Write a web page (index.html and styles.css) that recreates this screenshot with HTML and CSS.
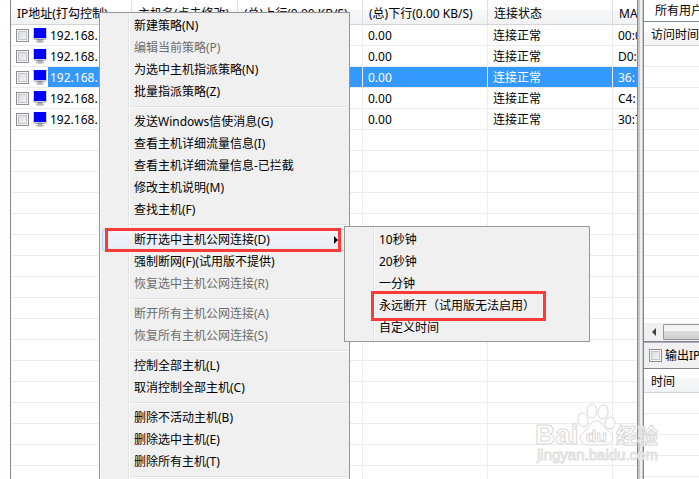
FILE: index.html
```
<!DOCTYPE html>
<html lang="zh-CN">
<head>
<meta charset="utf-8">
<title>主机列表</title>
<link rel="stylesheet" href="styles.css">
</head>
<body>
<svg class="defs" aria-hidden="true">
  <symbol id="pc" viewBox="0 0 14 15">
    <rect x="0" y="0" width="14" height="11" fill="#c9ced6"/>
    <rect x="1" y="0" width="12" height="10" fill="#0000fa"/>
    <path d="M0 11h14l-3 1H3z" fill="#a4a8ae"/>
    <path d="M5 11h4v2H5z" fill="#8a8e94"/>
    <ellipse cx="7" cy="13.5" rx="4" ry="1.3" fill="#b4b8bd"/>
  </symbol>
</svg>
<main class="app">
  <section class="hosts">
    <table class="grid">
      <colgroup><col class="c-ip"><col class="c-name"><col class="c-num"><col class="c-num"><col class="c-num"><col></colgroup>
      <thead><tr><th>IP地址(打勾控制)</th><th>主机名(点击修改)</th><th>(总)上行(0.00 KB/S)</th><th>(总)下行(0.00 KB/S)</th><th>连接状态</th><th>MAC</th></tr></thead>
      <tbody>
        <tr><td class="ip"><label><input type="checkbox"><svg class="pc"><use href="#pc"/></svg><span>192.168.</span></label></td><td></td><td></td><td>0.00</td><td>连接正常</td><td>00:0</td></tr>
        <tr><td class="ip"><label><input type="checkbox"><svg class="pc"><use href="#pc"/></svg><span>192.168.</span></label></td><td></td><td></td><td>0.00</td><td>连接正常</td><td>D0:</td></tr>
        <tr class="selected"><td class="ip"><label><input type="checkbox"><svg class="pc"><use href="#pc"/></svg><span>192.168.</span></label></td><td></td><td></td><td>0.00</td><td>连接正常</td><td>36:</td></tr>
        <tr><td class="ip"><label><input type="checkbox"><svg class="pc"><use href="#pc"/></svg><span>192.168.</span></label></td><td></td><td></td><td>0.00</td><td>连接正常</td><td>C4:</td></tr>
        <tr><td class="ip"><label><input type="checkbox"><svg class="pc"><use href="#pc"/></svg><span>192.168.</span></label></td><td></td><td></td><td>0.00</td><td>连接正常</td><td>30:7</td></tr>
        <tr><td></td><td></td><td></td><td></td><td></td><td></td></tr>
        <tr><td></td><td></td><td></td><td></td><td></td><td></td></tr>
        <tr><td></td><td></td><td></td><td></td><td></td><td></td></tr>
        <tr><td></td><td></td><td></td><td></td><td></td><td></td></tr>
        <tr><td></td><td></td><td></td><td></td><td></td><td></td></tr>
        <tr><td></td><td></td><td></td><td></td><td></td><td></td></tr>
        <tr><td></td><td></td><td></td><td></td><td></td><td></td></tr>
        <tr><td></td><td></td><td></td><td></td><td></td><td></td></tr>
        <tr><td></td><td></td><td></td><td></td><td></td><td></td></tr>
        <tr><td></td><td></td><td></td><td></td><td></td><td></td></tr>
        <tr><td></td><td></td><td></td><td></td><td></td><td></td></tr>
        <tr><td></td><td></td><td></td><td></td><td></td><td></td></tr>
        <tr><td></td><td></td><td></td><td></td><td></td><td></td></tr>
        <tr><td></td><td></td><td></td><td></td><td></td><td></td></tr>
        <tr><td></td><td></td><td></td><td></td><td></td><td></td></tr>
        <tr><td></td><td></td><td></td><td></td><td></td><td></td></tr>
        <tr><td></td><td></td><td></td><td></td><td></td><td></td></tr>
      </tbody>
    </table>
  </section>
  <div class="splitter"></div>
  <aside class="side">
    <h2 class="title">所有用户</h2>
    <div class="list visits">
      <div class="list-head">访问时间</div>
      <div class="lines"></div>
      <div class="scroll"><button class="arrow" aria-label="向左滚动"><svg viewBox="0 0 4 8"><path d="M4 0v8L0 4z"/></svg></button><div class="thumb"></div></div>
    </div>
    <label class="output"><input type="checkbox"><span>输出IP</span></label>
    <div class="list times">
      <div class="list-head">时间</div>
      <div class="lines"></div>
    </div>
  </aside>
</main>

<div class="menu main-menu" role="menu">
  <button role="menuitem">新建策略(N)</button>
  <button role="menuitem" disabled>编辑当前策略(P)</button>
  <button role="menuitem">为选中主机指派策略(N)</button>
  <button role="menuitem">批量指派策略(Z)</button>
  <hr>
  <button role="menuitem">发送Windows信使消息(G)</button>
  <button role="menuitem">查看主机详细流量信息(I)</button>
  <button role="menuitem">查看主机详细流量信息-已拦截</button>
  <button role="menuitem">修改主机说明(M)</button>
  <button role="menuitem">查找主机(F)</button>
  <hr>
  <button role="menuitem" class="open marked">断开选中主机公网连接(D)<svg class="more" viewBox="0 0 4 8"><path d="M0 0v8l4-4z"/></svg></button>
  <button role="menuitem">强制断网(F)(试用版不提供)</button>
  <button role="menuitem" disabled>恢复选中主机公网连接(R)</button>
  <hr>
  <button role="menuitem" disabled>断开所有主机公网连接(A)</button>
  <button role="menuitem" disabled>恢复所有主机公网连接(S)</button>
  <hr>
  <button role="menuitem">控制全部主机(L)</button>
  <button role="menuitem">取消控制全部主机(C)</button>
  <hr>
  <button role="menuitem">删除不活动主机(B)</button>
  <button role="menuitem">删除选中主机(E)</button>
  <button role="menuitem">删除所有主机(T)</button>
  <hr>
</div>

<div class="menu sub-menu" role="menu">
  <button role="menuitem">10秒钟</button>
  <button role="menuitem">20秒钟</button>
  <button role="menuitem">一分钟</button>
  <button role="menuitem" class="marked">永远断开（试用版无法启用）</button>
  <button role="menuitem">自定义时间</button>
</div>

<svg class="watermark" viewBox="0 0 130 72" role="img" aria-label="Baidu 经验">
  <g class="wm">
    <text class="wm-logo" x="3" y="44">Bai</text>
    <ellipse cx="51" cy="20" rx="5" ry="7" transform="rotate(-10 51 20)"/>
    <ellipse cx="60" cy="11" rx="5" ry="7"/>
    <ellipse cx="71" cy="12" rx="5" ry="7" transform="rotate(10 71 12)"/>
    <ellipse cx="78" cy="23" rx="5" ry="6" transform="rotate(15 78 23)"/>
    <path d="M64 21c6 0 7 6 11 9 5 3 7 7 5 11-2 4-7 4-16 4s-13 0-15-4c-2-5 1-8 5-11 4-3 4-9 10-9z"/>
    <text class="wm-du" x="54" y="42">du</text>
    <text class="wm-cn" x="84" y="43">经验</text>
    <text class="wm-url" x="5" y="60">jingyan.baidu.com</text>
  </g>
</svg>
</body>
</html>
```
FILE: styles.css
```
* { box-sizing: border-box; }
html, body { height: 100%; }
body {
  margin: 0;
  overflow: hidden;
  background: #fff;
  color: #000;
  font: 12px/20px "Noto Sans", "Noto Sans CJK SC", sans-serif;
}
.defs { position: absolute; width: 0; height: 0; }
.app { display: flex; height: 100vh; padding-left: 10px; }

.hosts {
  flex: 1;
  min-width: 0;
  overflow: hidden;
  border-left: 1px solid #828790;
}
.grid { width: 100%; table-layout: fixed; border-collapse: separate; border-spacing: 0; }
.c-ip { width: 121px; }
.c-name { width: 106px; }
.c-num { width: 125px; }
th, td {
  height: 21px;
  padding: 1px 5px 0;
  overflow: hidden;
  white-space: nowrap;
  text-align: left;
  font-weight: 400;
  line-height: 19px;
  border-right: 1px solid #ececec;
  border-bottom: 1px solid #ececec;
}
th {
  height: 24px;
  padding: 3px 6px 0;
  background: linear-gradient(#fff 40%, #f7f8fa 40%, #f1f2f4);
  border-right-color: #dedfe1;
  border-bottom-color: #d5d5d5;
}
thead th { height: 25px; }
th:last-child, td:last-child { border-right: 0; }
.ip { padding: 0; }
.ip label { display: flex; align-items: center; height: 20px; padding-left: 5px; }
.ip span { flex: 1; height: 20px; padding: 1px 0 0 2px; }
.pc { width: 14px; height: 15px; margin: 0 1px 0 4px; }
.selected td:not(.ip), .selected .ip span { background: #3399ff; color: #fff; }

input[type="checkbox"] {
  appearance: none;
  flex: none;
  width: 13px;
  height: 13px;
  margin: 0;
  border: 1px solid #8e8f8f;
  background: linear-gradient(135deg, #d2d5da, #fafafa);
  box-shadow: inset 0 0 0 1px #f4f4f4, inset 0 0 0 2px #c4c8ce;
}

.splitter {
  width: 7px;
  background: linear-gradient(90deg, #828790 1px, #c8c9cc 1px 3px, #f0f0f0 3px 5px, #c8c9cc 5px 6px, #828790 6px);
}

.side { display: flex; flex-direction: column; width: 55px; overflow: hidden; white-space: nowrap; }
.title {
  height: 22px;
  margin: 0;
  padding-left: 11px;
  font-size: 12px;
  font-weight: 400;
  line-height: 22px;
  border-bottom: 1px solid #828790;
}
.list { display: flex; flex-direction: column; overflow: hidden; }
.visits { height: 320px; border-bottom: 1px solid #828790; }
.times { flex: 1; }
.list-head {
  height: 24px;
  padding: 1px 0 0 7px;
  line-height: 24px;
  background: linear-gradient(#fff 40%, #f7f8fa 40%, #f1f2f4);
  border-bottom: 1px solid #d5d5d5;
}
.lines { flex: 1; background: repeating-linear-gradient(#fff 0 20px, #ececec 20px 21px); }
.scroll { display: flex; height: 18px; background: #f0f0f0; }
.arrow { display: flex; align-items: center; justify-content: center; width: 19px; padding: 0; border: 0; background: none; }
.arrow svg { width: 4px; height: 8px; fill: #404040; }
.thumb {
  flex: 1;
  margin: 1px 0;
  border: 1px solid #979797;
  border-right: 0;
  border-radius: 2px 0 0 2px;
  background: linear-gradient(#f4f4f4 45%, #dcdcdc 45%, #cfcfcf);
}
.output {
  display: flex;
  align-items: center;
  gap: 3px;
  height: 27px;
  padding-left: 5px;
  background: #f0f0f0;
  border-top: 1px solid #a9acb2;
  border-bottom: 1px solid #828790;
}

.menu {
  position: absolute;
  padding: 2px;
  border: 1px solid #979797;
  background: linear-gradient(90deg, #f5f5f5 1px, #f0f0f0 1px 28px, #e2e3e3 28px 29px, #fff 29px 30px, #f0f0f0 30px);
}
.menu button {
  position: relative;
  display: block;
  width: 100%;
  height: 22px;
  padding: 0 0 0 32px;
  border: 0;
  background: none;
  color: #000;
  font: inherit;
  text-align: left;
  white-space: nowrap;
}
.menu button:disabled { color: #6d6d6d; }
.menu hr {
  height: 2px;
  margin: 3px 0 3px 28px;
  border: 0;
  border-top: 1px solid #e0e0e0;
  background: #fff;
}
.main-menu { left: 99px; top: 12px; width: 251px; }
.sub-menu { left: 344px; top: 226px; width: 246px; }
.menu .open {
  border-radius: 3px;
  background: linear-gradient(#f2f4f8, #e6ebf5);
  box-shadow: inset 0 0 0 1px #aecff7;
}
.more { position: absolute; right: 9px; top: 7px; width: 4px; height: 8px; }
.marked::after {
  content: "";
  position: absolute;
  inset: -1px 6px -1px 3px;
  border: 3px solid #f93a37;
}
.sub-menu .marked::after { inset: -4px 41px -4px 24px; }

.watermark { position: absolute; left: 532px; top: 400px; width: 130px; height: 72px; }
.wm { fill: #fff; fill-opacity: .7; stroke: #d9d9d9; stroke-width: 1; }
.wm text { font-family: "Liberation Sans", "Noto Sans CJK SC", sans-serif; font-weight: 700; }
.wm .wm-logo { font-size: 28px; }
.wm .wm-du { font-size: 17px; }
.wm .wm-cn { font-size: 21px; }
.wm .wm-url { font-size: 15px; font-weight: 400; stroke: #e0e0e0; }
```
